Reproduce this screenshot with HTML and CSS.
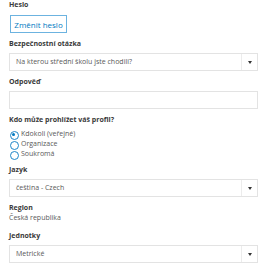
FILE: index.html
```html
<!DOCTYPE html>
<html lang="cs">
<head>
<meta charset="UTF-8" />
<title>Profil</title>
<link rel="stylesheet" href="styles.css">
</head>
<body>
  <form class="profile">
    <div class="field">
      <label class="lbl">Heslo</label>
      <button type="button" class="btn">Změnit heslo</button>
    </div>

    <div class="field">
      <label class="lbl">Bezpečnostní otázka</label>
      <div class="select">
        <span class="value">Na kterou střední školu jste chodili?</span>
        <span class="caret"></span>
      </div>
    </div>

    <div class="field">
      <label class="lbl">Odpověď</label>
      <div class="input"></div>
    </div>

    <div class="field">
      <label class="lbl">Kdo může prohlížet váš profil?</label>
      <div class="radio checked">Kdokoli (veřejné)</div>
      <div class="radio">Organizace</div>
      <div class="radio">Soukromá</div>
    </div>

    <div class="field">
      <label class="lbl">Jazyk</label>
      <div class="select">
        <span class="value">čeština - Czech</span>
        <span class="caret"></span>
      </div>
    </div>

    <div class="field short">
      <label class="lbl">Region</label>
      <div class="plain">Česká republika</div>
    </div>

    <div class="field">
      <label class="lbl">Jednotky</label>
      <div class="select">
        <span class="value">Metrické</span>
        <span class="caret"></span>
      </div>
    </div>
  </form>
</body>
</html>
```

FILE: styles.css
```css
* { box-sizing: border-box; margin: 0; padding: 0; }
body { background: #fff; font-family: "Open Sans", sans-serif; font-size: 7px; color: #4c4c4c; }
.profile { padding: 0 19px 0 9px; }
.field { margin-bottom: 6px; }
.lbl { display: block; font-weight: 700; font-size: 7px; line-height: 10px; margin-bottom: 4px; color: #3a3a3a; }
.btn { font-family: inherit; font-size: 8px; color: #0079c1; background: #fff; border: 1px solid #6cb3e0; height: 18px; width: 57px; padding: 0; margin-left: 1px; margin-top: 1px; }
.select { display: flex; height: 18px; border: 1px solid #e3e3e3; background: #fff; }
.select .value { flex: 1; padding-left: 6px; line-height: 16px; color: #595959; }
.select .caret { width: 16px; border-left: 1px solid #ececec; position: relative; }
.select .caret::after { content: ""; position: absolute; left: 6px; top: 7px; border-left: 2px solid transparent; border-right: 2px solid transparent; border-top: 3px solid #333; }
.input { height: 18px; border: 1px solid #e3e3e3; }
.radio { position: relative; padding-left: 12px; line-height: 10px; height: 10px; color: #595959; }
.radio::before { content: ""; position: absolute; left: 1px; top: 1.5px; width: 7px; height: 7px; border: 1px solid #1f86c8; border-radius: 50%; }
.radio.checked::after { content: ""; position: absolute; left: 3px; top: 3.5px; width: 3px; height: 3px; border-radius: 50%; background: #0079c1; }
.plain { line-height: 10px; color: #595959; margin-top: -4px; }
.field.short { margin-bottom: 8px; }
```
